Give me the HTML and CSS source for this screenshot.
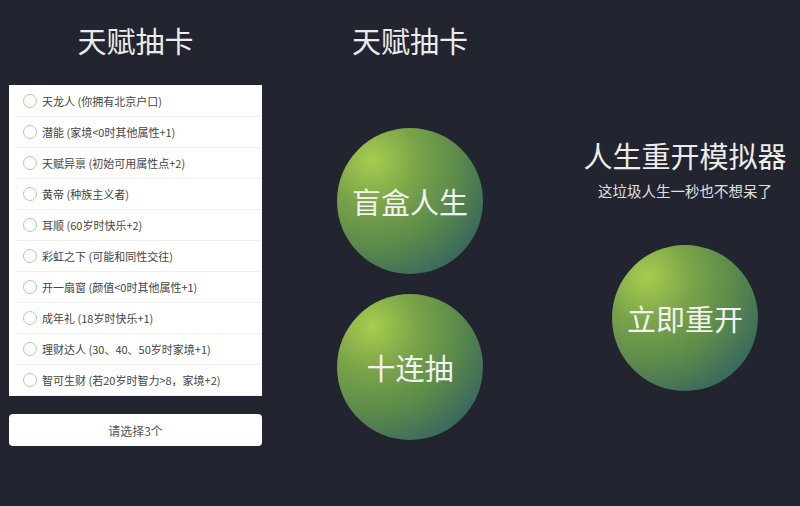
FILE: index.html
```html
<!DOCTYPE html>
<html lang="zh-CN">
<head>
<meta charset="utf-8">
<title>人生重开模拟器</title>
<link rel="stylesheet" href="styles.css">
</head>
<body>
<div class="page">
  <section class="col left">
    <h2 class="title">天赋抽卡</h2>
    <ul class="list">
      <li class="item"><span class="radio"></span>天龙人 (你拥有北京户口)</li>
      <li class="item"><span class="radio"></span>潜能 (家境&lt;0时其他属性+1)</li>
      <li class="item"><span class="radio"></span>天赋异禀 (初始可用属性点+2)</li>
      <li class="item"><span class="radio"></span>黄帝 (种族主义者)</li>
      <li class="item"><span class="radio"></span>耳顺 (60岁时快乐+2)</li>
      <li class="item"><span class="radio"></span>彩虹之下 (可能和同性交往)</li>
      <li class="item"><span class="radio"></span>开一扇窗 (颜值&lt;0时其他属性+1)</li>
      <li class="item"><span class="radio"></span>成年礼 (18岁时快乐+1)</li>
      <li class="item"><span class="radio"></span>理财达人 (30、40、50岁时家境+1)</li>
      <li class="item"><span class="radio"></span>智可生财 (若20岁时智力&gt;8，家境+2)</li>
    </ul>
    <button class="choose">请选择3个</button>
  </section>
  <section class="col mid">
    <h2 class="title">天赋抽卡</h2>
    <div class="ball ball-first">盲盒人生</div>
    <div class="ball ball-second">十连抽</div>
  </section>
  <section class="col right">
    <h1 class="main-title">人生重开模拟器</h1>
    <p class="subtitle">这垃圾人生一秒也不想呆了</p>
    <div class="ball ball-restart">立即重开</div>
  </section>
</div>
</body>
</html>
```
FILE: styles.css
```css
html, body {
  margin: 0;
  padding: 0;
  background: #22252f;
  width: 800px;
  height: 506px;
  overflow: hidden;
  font-family: "Noto Sans CJK SC", "Noto Sans", sans-serif;
}

.page {
  display: flex;
  align-items: flex-start;
  padding-left: 9px;
}

.col {
  display: flex;
  flex-direction: column;
  align-items: center;
}

.left {
  width: 253px;
}

.mid {
  width: 220px;
  margin-left: 38px;
}

.right {
  width: 230px;
  margin-left: 50px;
}

.title {
  margin: 26px 0 0;
  font-size: 29px;
  line-height: 29px;
  font-weight: 400;
  color: #ececec;
}

.list {
  list-style: none;
  margin: 30px 0 0;
  padding: 0;
  width: 253px;
  height: 311px;
  background: #ffffff;
  overflow: hidden;
}

.item {
  display: flex;
  align-items: center;
  height: 31px;
  margin-left: 8px;
  padding-left: 6px;
  border-bottom: 1px solid #efefef;
  box-sizing: border-box;
  font-size: 11px;
  color: #444;
  white-space: nowrap;
}

.item:first-child {
  height: 32px;
}

.radio {
  width: 14px;
  height: 14px;
  box-sizing: border-box;
  border: 1.5px solid #9fd69b;
  border-radius: 50%;
  margin-right: 5px;
  flex-shrink: 0;
}

.choose {
  margin-top: 18px;
  width: 253px;
  height: 32px;
  background: #ffffff;
  border: none;
  border-radius: 4px;
  font-family: inherit;
  font-size: 12px;
  color: #555;
  padding: 0;
}

.ball {
  width: 146px;
  height: 146px;
  border-radius: 50%;
  display: flex;
  align-items: center;
  justify-content: center;
  font-size: 29px;
  color: #f2f2f2;
  background: radial-gradient(circle at 24% 22%, #a8cd4f 0%, #7ba449 28%, #5b8a4b 55%, #3d6c5c 78%, #2b5467 100%);
}

.ball-first {
  margin-top: 73px;
}

.ball-second {
  margin-top: 20px;
}

.main-title {
  margin: 140px 0 0;
  font-size: 29px;
  line-height: 30px;
  font-weight: 400;
  color: #ececec;
  white-space: nowrap;
}

.subtitle {
  margin: 13px 0 0;
  font-size: 14.5px;
  line-height: 16px;
  color: #e0e0e0;
  white-space: nowrap;
}

.ball-restart {
  margin-top: 46px;
}
```
